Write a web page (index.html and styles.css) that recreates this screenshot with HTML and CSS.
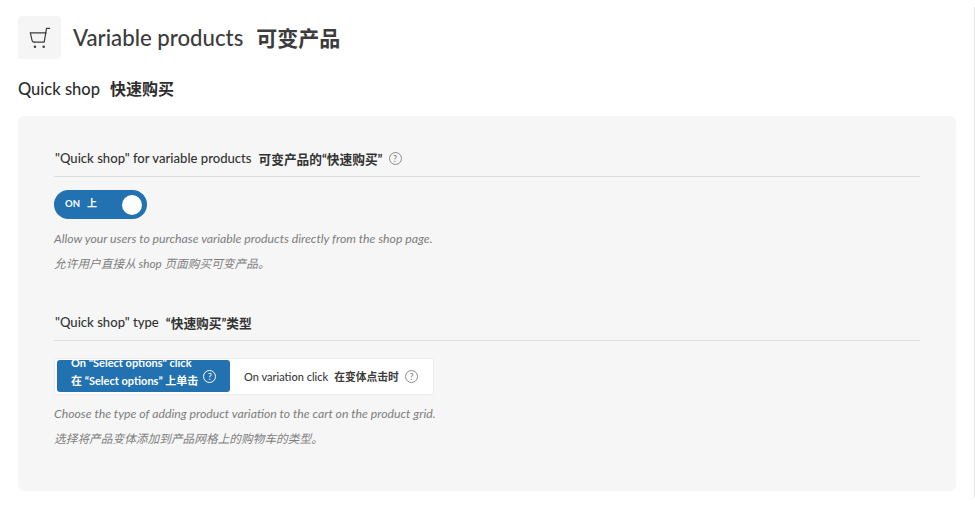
FILE: index.html
```html
<!DOCTYPE html>
<html lang="en">
<head>
<meta charset="utf-8">
<title>Variable products</title>
<link rel="stylesheet" href="styles.css">
</head>
<body>
<main class="page">
  <header class="head">
    <div class="tile">
      <svg width="22" height="22" viewBox="0 0 24 24" fill="none" stroke="#3c3c3c" stroke-width="1.3" stroke-linecap="round" stroke-linejoin="round">
        <path d="M22.5 1.5h-3.4L16.6 16.5H5.8"/>
        <path d="M1.5 6.5h17.2"/>
        <path d="M1.5 6.5l1.8 8q.4 2 2.5 2"/>
        <circle cx="6.5" cy="21.5" r=".7" fill="#3c3c3c"/>
        <circle cx="16" cy="21.5" r=".7" fill="#3c3c3c"/>
      </svg>
    </div>
    <h1 class="title">Variable products<span class="cn">可变产品</span></h1>
  </header>
  <h2 class="subtitle">Quick shop<span class="cn">快速购买</span></h2>
  <section class="panel">
    <div class="field first">
      <h3 class="label">"Quick shop" for variable products<span class="cn">可变产品的“快速购买”</span><span class="help">?</span></h3>
      <div class="switch"><span class="switch-text">ON<span class="cn-s">上</span></span><span class="knob"></span></div>
      <p class="desc">Allow your users to purchase variable products directly from the shop page.</p>
      <p class="desc cn-desc">允许用户直接从 shop 页面购买可变产品。</p>
    </div>
    <div class="field">
      <h3 class="label">"Quick shop" type<span class="cn">“快速购买”类型</span></h3>
      <div class="segments">
        <div class="seg active">
          <span class="seg-text">On "Select options" click<br>在 “Select options” 上单击</span>
          <span class="help light">?</span>
        </div>
        <div class="seg">
          <span>On variation click<span class="cn-m">在变体点击时</span></span>
          <span class="help">?</span>
        </div>
      </div>
      <p class="desc">Choose the type of adding product variation to the cart on the product grid.</p>
      <p class="desc cn-desc">选择将产品变体添加到产品网格上的购物车的类型。</p>
    </div>
  </section>
</main>
<div class="edge"></div>
</body>
</html>
```
FILE: styles.css
```css
* { box-sizing: border-box; }
html, body { margin: 0; height: 100%; background: #fff; overflow: hidden; }
body {
  font-family: "Lato", "Noto Sans CJK SC", sans-serif;
  color: #3c3c3c;
}
.page { width: 956px; padding: 16px 0 0 18px; }
.head { display: flex; align-items: center; gap: 12px; height: 43px; }
.tile {
  width: 43px; height: 43px; border-radius: 4px; background: #f5f5f5;
  display: flex; align-items: center; justify-content: center;
}
.title { margin: 0; font-size: 22.2px; line-height: 43px; font-weight: 500; color: #3c3c3c; }
.title .cn { margin-left: 13px; font-weight: 700; font-size: 21px; }
.subtitle { margin: 19px 0 16px; font-size: 16.5px; line-height: 22px; font-weight: 500; color: #2e2e2e; }
.subtitle .cn { margin-left: 10px; font-weight: 700; font-size: 16px; }
.panel {
  background: #f6f6f6; border-radius: 6px; height: 375px;
  padding: 32px 36px 0 36px;
}
.field + .field { margin-top: 37px; }
.label {
  display: flex; align-items: center; margin: 0 0 13px;
  height: 29px; padding: 0 0 8px 1px; border-bottom: 1px solid #dedede;
  font-size: 13.1px; font-weight: 500; color: #333;
}
.label .cn { margin-left: 7px; font-weight: 700; font-size: 12.7px; }
.help {
  display: inline-flex; align-items: center; justify-content: center; flex: none;
  width: 13px; height: 13px; border: 1px solid #8a8a8a; border-radius: 50%;
  font-size: 9px; font-weight: 400; line-height: 1; color: #777; margin-left: 6px;
}
.help.light { border-color: #fff; color: #fff; margin-left: 5px; }
.switch {
  display: flex; align-items: center; justify-content: space-between;
  width: 93px; height: 29px; border-radius: 15px; background: #2271b1;
  padding: 0 5px 0 11px; color: #fff;
}
.switch-text { font-size: 9.5px; font-weight: 700; margin-top: -4px; }
.cn-s { margin-left: 7px; font-size: 10px; }
.knob { width: 20px; height: 20px; border-radius: 50%; background: #fff; }
.desc {
  margin: 0; font-size: 12.25px; line-height: 24.5px; font-style: italic; color: #7d7d7d;
}
.cn-desc { font-size: 11.7px; margin-top: -1px; }
.switch + .desc { margin-top: 8px; }
.segments {
  display: flex; align-items: flex-start; width: 380px; height: 37px;
  background: #fff; border: 1px solid #ececec; border-radius: 3px;
  padding: 1px 2px; margin-top: 17px;
}
.seg {
  display: flex; align-items: center; height: 32px; padding-left: 14px;
  font-size: 11px; font-weight: 500; color: #3c3c3c;
}
.seg.active {
  width: 173px; background: #2271b1; color: #fff;
  border-radius: 3px; font-weight: 700; overflow: hidden;
}
.seg-text { line-height: 18px; white-space: nowrap; position: relative; top: -4px; }
.cn-m { margin-left: 6px; font-weight: 700; font-size: 10.8px; }
.segments + .desc { margin-top: 7px; }
.edge { position: absolute; left: 974px; top: 7px; width: 1px; height: 491px; background: #e6e6e6; }
```
